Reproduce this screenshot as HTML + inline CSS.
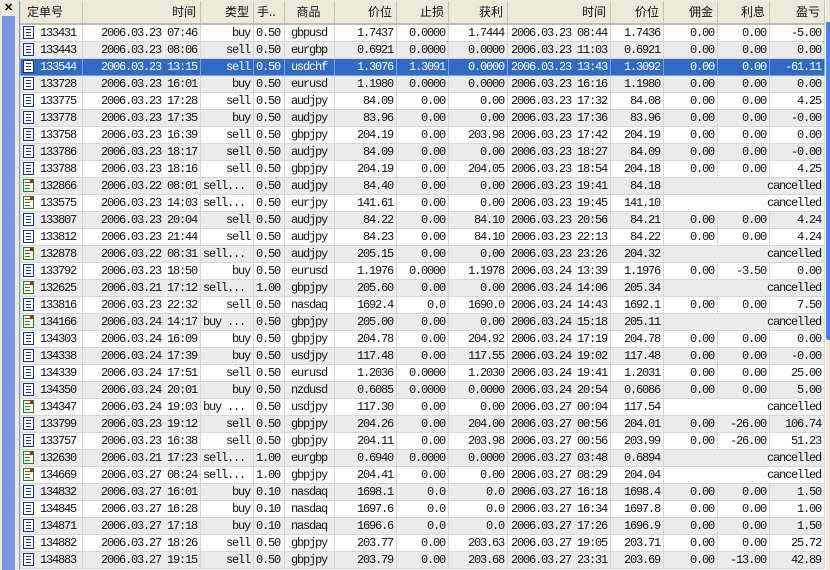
<!DOCTYPE html>
<html><head><meta charset="utf-8">
<style>
html,body{margin:0;padding:0;width:830px;height:570px;overflow:hidden;background:#ece9d8;}
body{position:relative;font-family:"Liberation Mono","Noto Sans CJK SC",monospace;}
#lb{position:absolute;left:2px;top:16px;width:13px;height:554px;background:#7b97e0;}
#x{position:absolute;left:4px;top:1px;font:bold 11px "Liberation Sans",sans-serif;color:#000;}
#rb{position:absolute;left:825px;top:22px;width:5px;height:318px;background:#3f86ee;border-bottom-left-radius:4px;}
#wrap{position:absolute;left:19px;top:1px;width:806px;height:569px;background:#fff;overflow:hidden;border-left:1px solid #7f9db9;}
table{border-collapse:collapse;table-layout:fixed;width:804px;font-size:12px;letter-spacing:-1.2px;}
td,th{height:16px;padding:0 3px 0 2px;border:1px solid #d6d6d6;border-top:none;white-space:nowrap;overflow:visible;text-align:right;line-height:16px;color:#111;}
th{height:22px;background:#ece9d8;font-family:"Noto Sans CJK SC","Liberation Sans",sans-serif;font-weight:normal;font-size:12px;letter-spacing:0;border-right:1px solid #c5c2b2;border-bottom:2px solid #c0bdaa;padding-right:4px;}
th.l{text-align:left;padding-left:6px;}
tr:nth-child(odd) td{background:#ebebeb;}
tr.s td{background:#316ac5 !important;color:#fff;border-color:#7d9fd8;}
td.c{text-align:center;}
td.l{text-align:left;}
td.t{text-align:left;padding-left:2px;}
.i{display:inline-block;width:9px;height:11px;border:1px solid #1c2f94;background:#fff linear-gradient(#fff 2px,#1c2f94 2px,#1c2f94 3px,#fff 3px,#fff 5px,#1c2f94 5px,#1c2f94 6px,#fff 6px,#fff 8px,#1c2f94 8px,#1c2f94 9px,#fff 9px) no-repeat 2px 0/5px 11px;vertical-align:-3px;margin-right:6px;position:relative;}
.g{border-color:#2f7d1c;background:#fff linear-gradient(#fff 2px,#2f7d1c 2px,#2f7d1c 3px,#fff 3px,#fff 5px,#2f7d1c 5px,#2f7d1c 6px,#fff 6px,#fff 8px,#2f7d1c 8px,#2f7d1c 9px,#fff 9px) no-repeat 1px 0/5px 11px;}
.g:after{content:"";position:absolute;right:0;top:0;width:3px;height:3px;background:#d00;}
</style></head><body>
<div id="lb"></div><div id="x">✕</div>
<div id="rb"></div>
<div id="wrap">
<table>
<colgroup><col style="width:62px"><col style="width:118px"><col style="width:53px"><col style="width:31px"><col style="width:50px"><col style="width:62px"><col style="width:52px"><col style="width:59px"><col style="width:103px"><col style="width:53px"><col style="width:54px"><col style="width:52px"><col style="width:55px"></colgroup>
<tr><th class="l">定单号</th><th>时间</th><th>类型</th><th class="l" style="padding-left:3px">手..</th><th style="text-align:center">商品</th><th>价位</th><th>止损</th><th>获利</th><th>时间</th><th>价位</th><th>佣金</th><th>利息</th><th>盈亏</th></tr>
<tr><td class="t"><span class="i"></span>133431</td><td>2006.03.23 07:46</td><td>buy</td><td class="l">0.50</td><td class="c">gbpusd</td><td>1.7437</td><td>0.0000</td><td>1.7444</td><td>2006.03.23 08:44</td><td>1.7436</td><td>0.00</td><td>0.00</td><td>-5.00</td></tr>
<tr><td class="t"><span class="i"></span>133443</td><td>2006.03.23 08:06</td><td>sell</td><td class="l">0.50</td><td class="c">eurgbp</td><td>0.6921</td><td>0.0000</td><td>0.0000</td><td>2006.03.23 11:03</td><td>0.6921</td><td>0.00</td><td>0.00</td><td>0.00</td></tr>
<tr class="s"><td class="t"><span class="i"></span>133544</td><td>2006.03.23 13:15</td><td>sell</td><td class="l">0.50</td><td class="c">usdchf</td><td>1.3076</td><td>1.3091</td><td>0.0000</td><td>2006.03.23 13:43</td><td>1.3092</td><td>0.00</td><td>0.00</td><td>-61.11</td></tr>
<tr><td class="t"><span class="i"></span>133728</td><td>2006.03.23 16:01</td><td>buy</td><td class="l">0.50</td><td class="c">eurusd</td><td>1.1980</td><td>0.0000</td><td>0.0000</td><td>2006.03.23 16:16</td><td>1.1980</td><td>0.00</td><td>0.00</td><td>0.00</td></tr>
<tr><td class="t"><span class="i"></span>133775</td><td>2006.03.23 17:28</td><td>sell</td><td class="l">0.50</td><td class="c">audjpy</td><td>84.09</td><td>0.00</td><td>0.00</td><td>2006.03.23 17:32</td><td>84.08</td><td>0.00</td><td>0.00</td><td>4.25</td></tr>
<tr><td class="t"><span class="i"></span>133778</td><td>2006.03.23 17:35</td><td>buy</td><td class="l">0.50</td><td class="c">audjpy</td><td>83.96</td><td>0.00</td><td>0.00</td><td>2006.03.23 17:36</td><td>83.96</td><td>0.00</td><td>0.00</td><td>-0.00</td></tr>
<tr><td class="t"><span class="i"></span>133758</td><td>2006.03.23 16:39</td><td>sell</td><td class="l">0.50</td><td class="c">gbpjpy</td><td>204.19</td><td>0.00</td><td>203.98</td><td>2006.03.23 17:42</td><td>204.19</td><td>0.00</td><td>0.00</td><td>0.00</td></tr>
<tr><td class="t"><span class="i"></span>133786</td><td>2006.03.23 18:17</td><td>sell</td><td class="l">0.50</td><td class="c">audjpy</td><td>84.09</td><td>0.00</td><td>0.00</td><td>2006.03.23 18:27</td><td>84.09</td><td>0.00</td><td>0.00</td><td>-0.00</td></tr>
<tr><td class="t"><span class="i"></span>133788</td><td>2006.03.23 18:16</td><td>sell</td><td class="l">0.50</td><td class="c">gbpjpy</td><td>204.19</td><td>0.00</td><td>204.05</td><td>2006.03.23 18:54</td><td>204.18</td><td>0.00</td><td>0.00</td><td>4.25</td></tr>
<tr><td class="t"><span class="i g"></span>132866</td><td>2006.03.22 08:01</td><td class="l">sell...</td><td class="l">0.50</td><td class="c">audjpy</td><td>84.40</td><td>0.00</td><td>0.00</td><td>2006.03.23 19:41</td><td>84.18</td><td colspan="3">cancelled</td></tr>
<tr><td class="t"><span class="i g"></span>133575</td><td>2006.03.23 14:03</td><td class="l">sell...</td><td class="l">0.50</td><td class="c">eurjpy</td><td>141.61</td><td>0.00</td><td>0.00</td><td>2006.03.23 19:45</td><td>141.10</td><td colspan="3">cancelled</td></tr>
<tr><td class="t"><span class="i"></span>133807</td><td>2006.03.23 20:04</td><td>sell</td><td class="l">0.50</td><td class="c">audjpy</td><td>84.22</td><td>0.00</td><td>84.10</td><td>2006.03.23 20:56</td><td>84.21</td><td>0.00</td><td>0.00</td><td>4.24</td></tr>
<tr><td class="t"><span class="i"></span>133812</td><td>2006.03.23 21:44</td><td>sell</td><td class="l">0.50</td><td class="c">audjpy</td><td>84.23</td><td>0.00</td><td>84.10</td><td>2006.03.23 22:13</td><td>84.22</td><td>0.00</td><td>0.00</td><td>4.24</td></tr>
<tr><td class="t"><span class="i g"></span>132878</td><td>2006.03.22 08:31</td><td class="l">sell...</td><td class="l">0.50</td><td class="c">audjpy</td><td>205.15</td><td>0.00</td><td>0.00</td><td>2006.03.23 23:26</td><td>204.32</td><td colspan="3">cancelled</td></tr>
<tr><td class="t"><span class="i"></span>133792</td><td>2006.03.23 18:50</td><td>buy</td><td class="l">0.50</td><td class="c">eurusd</td><td>1.1976</td><td>0.0000</td><td>1.1978</td><td>2006.03.24 13:39</td><td>1.1976</td><td>0.00</td><td>-3.50</td><td>0.00</td></tr>
<tr><td class="t"><span class="i g"></span>132625</td><td>2006.03.21 17:12</td><td class="l">sell...</td><td class="l">1.00</td><td class="c">gbpjpy</td><td>205.60</td><td>0.00</td><td>0.00</td><td>2006.03.24 14:06</td><td>205.34</td><td colspan="3">cancelled</td></tr>
<tr><td class="t"><span class="i"></span>133816</td><td>2006.03.23 22:32</td><td>sell</td><td class="l">0.50</td><td class="c">nasdaq</td><td>1692.4</td><td>0.0</td><td>1690.0</td><td>2006.03.24 14:43</td><td>1692.1</td><td>0.00</td><td>0.00</td><td>7.50</td></tr>
<tr><td class="t"><span class="i g"></span>134166</td><td>2006.03.24 14:17</td><td class="l">buy ...</td><td class="l">0.50</td><td class="c">gbpjpy</td><td>205.00</td><td>0.00</td><td>0.00</td><td>2006.03.24 15:18</td><td>205.11</td><td colspan="3">cancelled</td></tr>
<tr><td class="t"><span class="i"></span>134303</td><td>2006.03.24 16:09</td><td>buy</td><td class="l">0.50</td><td class="c">gbpjpy</td><td>204.78</td><td>0.00</td><td>204.92</td><td>2006.03.24 17:19</td><td>204.78</td><td>0.00</td><td>0.00</td><td>0.00</td></tr>
<tr><td class="t"><span class="i"></span>134338</td><td>2006.03.24 17:39</td><td>buy</td><td class="l">0.50</td><td class="c">usdjpy</td><td>117.48</td><td>0.00</td><td>117.55</td><td>2006.03.24 19:02</td><td>117.48</td><td>0.00</td><td>0.00</td><td>-0.00</td></tr>
<tr><td class="t"><span class="i"></span>134339</td><td>2006.03.24 17:51</td><td>sell</td><td class="l">0.50</td><td class="c">eurusd</td><td>1.2036</td><td>0.0000</td><td>1.2030</td><td>2006.03.24 19:41</td><td>1.2031</td><td>0.00</td><td>0.00</td><td>25.00</td></tr>
<tr><td class="t"><span class="i"></span>134350</td><td>2006.03.24 20:01</td><td>buy</td><td class="l">0.50</td><td class="c">nzdusd</td><td>0.6085</td><td>0.0000</td><td>0.0000</td><td>2006.03.24 20:54</td><td>0.6086</td><td>0.00</td><td>0.00</td><td>5.00</td></tr>
<tr><td class="t"><span class="i g"></span>134347</td><td>2006.03.24 19:03</td><td class="l">buy ...</td><td class="l">0.50</td><td class="c">usdjpy</td><td>117.30</td><td>0.00</td><td>0.00</td><td>2006.03.27 00:04</td><td>117.54</td><td colspan="3">cancelled</td></tr>
<tr><td class="t"><span class="i"></span>133799</td><td>2006.03.23 19:12</td><td>sell</td><td class="l">0.50</td><td class="c">gbpjpy</td><td>204.26</td><td>0.00</td><td>204.00</td><td>2006.03.27 00:56</td><td>204.01</td><td>0.00</td><td>-26.00</td><td>106.74</td></tr>
<tr><td class="t"><span class="i"></span>133757</td><td>2006.03.23 16:38</td><td>sell</td><td class="l">0.50</td><td class="c">gbpjpy</td><td>204.11</td><td>0.00</td><td>203.98</td><td>2006.03.27 00:56</td><td>203.99</td><td>0.00</td><td>-26.00</td><td>51.23</td></tr>
<tr><td class="t"><span class="i g"></span>132630</td><td>2006.03.21 17:23</td><td class="l">sell...</td><td class="l">1.00</td><td class="c">eurgbp</td><td>0.6940</td><td>0.0000</td><td>0.0000</td><td>2006.03.27 03:48</td><td>0.6894</td><td colspan="3">cancelled</td></tr>
<tr><td class="t"><span class="i g"></span>134669</td><td>2006.03.27 08:24</td><td class="l">sell...</td><td class="l">1.00</td><td class="c">gbpjpy</td><td>204.41</td><td>0.00</td><td>0.00</td><td>2006.03.27 08:29</td><td>204.04</td><td colspan="3">cancelled</td></tr>
<tr><td class="t"><span class="i"></span>134832</td><td>2006.03.27 16:01</td><td>buy</td><td class="l">0.10</td><td class="c">nasdaq</td><td>1698.1</td><td>0.0</td><td>0.0</td><td>2006.03.27 16:18</td><td>1698.4</td><td>0.00</td><td>0.00</td><td>1.50</td></tr>
<tr><td class="t"><span class="i"></span>134845</td><td>2006.03.27 16:28</td><td>buy</td><td class="l">0.10</td><td class="c">nasdaq</td><td>1697.6</td><td>0.0</td><td>0.0</td><td>2006.03.27 16:34</td><td>1697.8</td><td>0.00</td><td>0.00</td><td>1.00</td></tr>
<tr><td class="t"><span class="i"></span>134871</td><td>2006.03.27 17:18</td><td>buy</td><td class="l">0.10</td><td class="c">nasdaq</td><td>1696.6</td><td>0.0</td><td>0.0</td><td>2006.03.27 17:26</td><td>1696.9</td><td>0.00</td><td>0.00</td><td>1.50</td></tr>
<tr><td class="t"><span class="i"></span>134882</td><td>2006.03.27 18:26</td><td>sell</td><td class="l">0.50</td><td class="c">gbpjpy</td><td>203.77</td><td>0.00</td><td>203.63</td><td>2006.03.27 19:05</td><td>203.71</td><td>0.00</td><td>0.00</td><td>25.72</td></tr>
<tr><td class="t"><span class="i"></span>134883</td><td>2006.03.27 19:15</td><td>sell</td><td class="l">0.50</td><td class="c">gbpjpy</td><td>203.79</td><td>0.00</td><td>203.68</td><td>2006.03.27 23:31</td><td>203.69</td><td>0.00</td><td>-13.00</td><td>42.89</td></tr>
</table>
</div>
</body></html>
